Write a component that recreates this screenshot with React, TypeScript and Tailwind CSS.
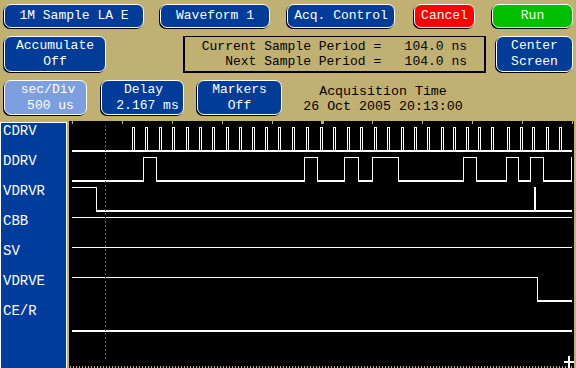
import React from "react";

const pulses = [132, 145, 159, 172, 186, 199, 212, 226, 239, 252, 265, 278, 292, 306, 320, 333, 347, 360, 374, 387, 401, 414, 427, 441, 453, 466, 478, 491, 507, 520, 532, 546, 559];

// DDRV edges: rise, fall pairs
const ddrv: [number, number][] = [[143, 156], [304, 317], [344, 358], [372, 398], [463, 476], [506, 518], [530, 543], [571, 572]];

const labels = ["CDRV", "DDRV", "VDRVR", "CBB", "SV", "VDRVE", "CE/R"];

const ticks = [72, 122, 172, 222, 272, 322, 372, 422, 472, 522, 572];

const redDots = Array.from({ length: 59 }, (_, i) => 125 + i * 4);
const tanDots = Array.from({ length: 168 }, (_, i) => 70 + i * 3);

function Waves() {
  const cdrv = pulses.map(p => `M${p + 0.5} 151V127.5H${p + 2.5}V151`).join("");
  let d = "M72 180.5";
  const lows: [number, number][] = [];
  let s = 72;
  ddrv.forEach(([r, f]) => {
    d += `H${r + 0.5}V157.5`;
    d += f >= 572 ? "H572" : `H${f + 0.5}V180.5`;
    lows.push([s, r + 1]);
    s = f;
  });
  return (
    <svg width="505" height="247" viewBox="69 121 505 247" className="block" shapeRendering="crispEdges">
      {ticks.map(t => (
        <rect key={t} x={t} y={121} width={1} height={3} fill="#c0b072" />
      ))}
      <rect x={321} y={121} width={3} height={3} fill="#c0b072" />
      <g stroke="#fff" fill="none" strokeWidth={1}>
        {/* CDRV */}
        <path d={cdrv} />
        {/* DDRV */}
        <path d={d} />
        {/* VDRVR */}
        <path d="M72 187.5H96.5V210" />
        {/* CBB */}
        <path d="M72 217.5H572" />
        {/* SV */}
        <path d="M72 247.5H572" />
        {/* VDRVE */}
        <path d="M72 277.5H537.5V301" />
      </g>
      <g fill="#fff">
        <rect x={72} y={150} width={500} height={2} />
        {lows.map(([a, b]) => (
          <rect key={a} x={a} y={180} width={b - a} height={2} />
        ))}
        <rect x={96} y={210} width={476} height={2} />
        <rect x={534} y={187} width={2} height={24} />
        <rect x={537} y={300} width={35} height={2} />
        <rect x={72} y={330} width={500} height={2} />
      </g>
      {redDots.map(y => (
        <rect key={y} x={105} y={y} width={1} height={2} fill="#ff1010" />
      ))}
      {tanDots.map(x => (
        <rect key={x} x={x} y={366} width={1} height={2} fill="#c0b072" />
      ))}
      <rect x={564} y={361} width={12} height={2} fill="#fff" />
      <rect x={568} y={356} width={2} height={12} fill="#fff" />
    </svg>
  );
}

export default function App() {
  const btn = "rounded-[7px] border border-white shadow-[-1px_1px_0_#000] text-white flex flex-col items-center justify-center leading-[16px] shrink-0";
  return (
    <div className="w-[576px] h-[368px] overflow-hidden bg-[#c0b072] font-['Liberation_Mono',monospace] text-[13px]">
      <div className="h-[121px] flex flex-col pl-[4px]">
        <div className="flex pt-[4px]">
          <div className={`${btn} w-[140px] h-[24px] bg-[#003c98]`}>1M Sample LA E</div>
          <div className={`${btn} ml-[16px] w-[110px] h-[24px] bg-[#003c98]`}>Waveform 1</div>
          <div className={`${btn} ml-[17px] w-[108px] h-[24px] bg-[#003c98]`}>Acq. Control</div>
          <div className={`${btn} ml-[19px] w-[61px] h-[24px] bg-[#ff0000]`}>Cancel</div>
          <div className={`${btn} ml-[17px] w-[81px] h-[24px] bg-[#00c000]`}>Run</div>
        </div>
        <div className="flex mt-[8px]">
          <div className={`${btn} w-[102px] h-[36px] bg-[#003c98]`}>
            <span>Accumulate</span>
            <span>Off</span>
          </div>
          <div className="ml-[77px] w-[303px] h-[37px] border-2 border-t border-black flex flex-col items-end justify-center pr-[17px] leading-[15.5px] text-black whitespace-pre">
            <span>Current Sample Period =   104.0 ns</span>
            <span>Next Sample Period =   104.0 ns</span>
          </div>
          <div className={`${btn} ml-[10px] w-[77px] h-[36px] bg-[#003c98]`}>
            <span>Center</span>
            <span>Screen</span>
          </div>
        </div>
        <div className="flex mt-[7px] items-start">
          <div className={`${btn} w-[83px] h-[35px] bg-[#7d9fe0]`}>
            <span className="pl-[5px]">sec/Div</span>
            <span className="pl-[10px]">500 us</span>
          </div>
          <div className={`${btn} ml-[14px] w-[83px] h-[35px] bg-[#003c98]`}>
            <span className="pl-[2px]">Delay</span>
            <span className="pl-[10px]">2.167 ms</span>
          </div>
          <div className={`${btn} ml-[13px] w-[85px] h-[35px] bg-[#003c98]`}>
            <span>Markers</span>
            <span>Off</span>
          </div>
          <div className="ml-[21px] w-[160px] pt-[4px] flex flex-col items-center text-black leading-[15px] text-[13.3px] whitespace-pre">
            <span>Acquisition Time</span>
            <span>26 Oct 2005 20:13:00</span>
          </div>
        </div>
      </div>
      <div className="h-[247px] flex">
        <div className="mt-[1px] w-[67px] h-[246px] bg-[#003c9c] border-t border-l border-r border-white flex flex-col gap-[13px] pl-[2px] text-white leading-[17px] text-[14px]">
          {labels.map(l => (
            <span key={l}>{l}</span>
          ))}
        </div>
        <div className="ml-[2px] w-[505px] h-[247px] bg-black">
          <Waves />
        </div>
      </div>
    </div>
  );
}
